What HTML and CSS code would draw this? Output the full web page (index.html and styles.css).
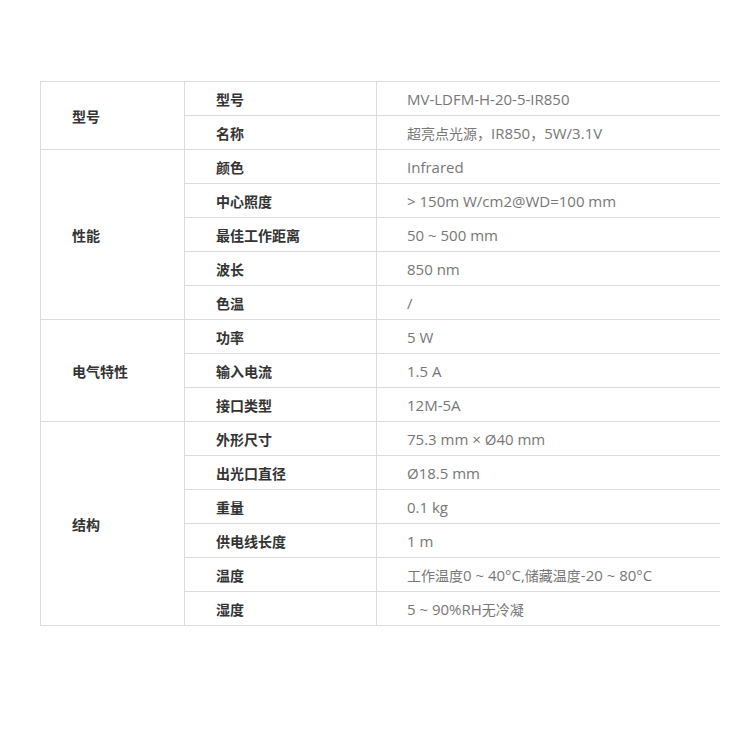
FILE: index.html
```html
<!DOCTYPE html>
<html lang="zh">
<head>
<meta charset="utf-8">
<link rel="stylesheet" href="styles.css">
</head>
<body>
<div class="wrap">
<table class="spec">
<tbody>
<tr><td class="group" rowspan="2">型号</td><td class="key">型号</td><td class="val">MV-LDFM-H-20-5-IR850</td></tr>
<tr><td class="key">名称</td><td class="val"><span class="cn">超亮点光源，</span>IR850<span class="cn">，</span>5W/3.1V</td></tr>
<tr><td class="group" rowspan="5">性能</td><td class="key">颜色</td><td class="val">Infrared</td></tr>
<tr><td class="key">中心照度</td><td class="val">&gt; 150m W/cm2@WD=100 mm</td></tr>
<tr><td class="key">最佳工作距离</td><td class="val">50 ~ 500 mm</td></tr>
<tr><td class="key">波长</td><td class="val">850 nm</td></tr>
<tr><td class="key">色温</td><td class="val">/</td></tr>
<tr><td class="group" rowspan="3">电气特性</td><td class="key">功率</td><td class="val">5 W</td></tr>
<tr><td class="key">输入电流</td><td class="val">1.5 A</td></tr>
<tr><td class="key">接口类型</td><td class="val">12M-5A</td></tr>
<tr><td class="group" rowspan="6">结构</td><td class="key">外形尺寸</td><td class="val">75.3 mm × Ø40 mm</td></tr>
<tr><td class="key">出光口直径</td><td class="val">Ø18.5 mm</td></tr>
<tr><td class="key">重量</td><td class="val">0.1 kg</td></tr>
<tr><td class="key">供电线长度</td><td class="val">1 m</td></tr>
<tr><td class="key">温度</td><td class="val"><span class="cn">工作温度</span>0 ~ 40°C,<span class="cn">储藏温度</span>-20 ~ 80°C</td></tr>
<tr><td class="key">湿度</td><td class="val">5 ~ 90%RH<span class="cn">无冷凝</span></td></tr>
</tbody>
</table>
</div>
</body>
</html>
```
FILE: styles.css
```css
html, body {
  margin: 0;
  padding: 0;
  background: #fff;
}
.wrap {
  padding: 81px 0 0 40px;
}
.spec {
  border-collapse: collapse;
  width: 680px;
  table-layout: fixed;
  font-family: "Open Sans", "Noto Sans CJK SC", sans-serif;
  font-size: 15px;
}
.spec td {
  height: 34px;
  padding: 0 0 0 31px;
  border-top: 1px solid #dcdcdc;
  border-bottom: 1px solid #dcdcdc;
  box-sizing: border-box;
  vertical-align: middle;
  line-height: 18px;
  white-space: nowrap;
}
.spec td.group {
  width: 144px;
  border-left: 1px solid #dcdcdc;
  border-right: 1px solid #dcdcdc;
  color: #333;
  font-weight: bold;
  font-size: 14px;
  font-family: "Noto Sans CJK SC", sans-serif;
}
.spec td.key {
  width: 192px;
  border-right: 1px solid #dcdcdc;
  color: #333;
  font-weight: bold;
  font-size: 14px;
  font-family: "Noto Sans CJK SC", sans-serif;
}
.spec td.val {
  color: #777;
  padding-left: 30px;
}
.cn {
  font-family: "Noto Sans CJK SC", sans-serif;
  font-size: 14px;
}
```
